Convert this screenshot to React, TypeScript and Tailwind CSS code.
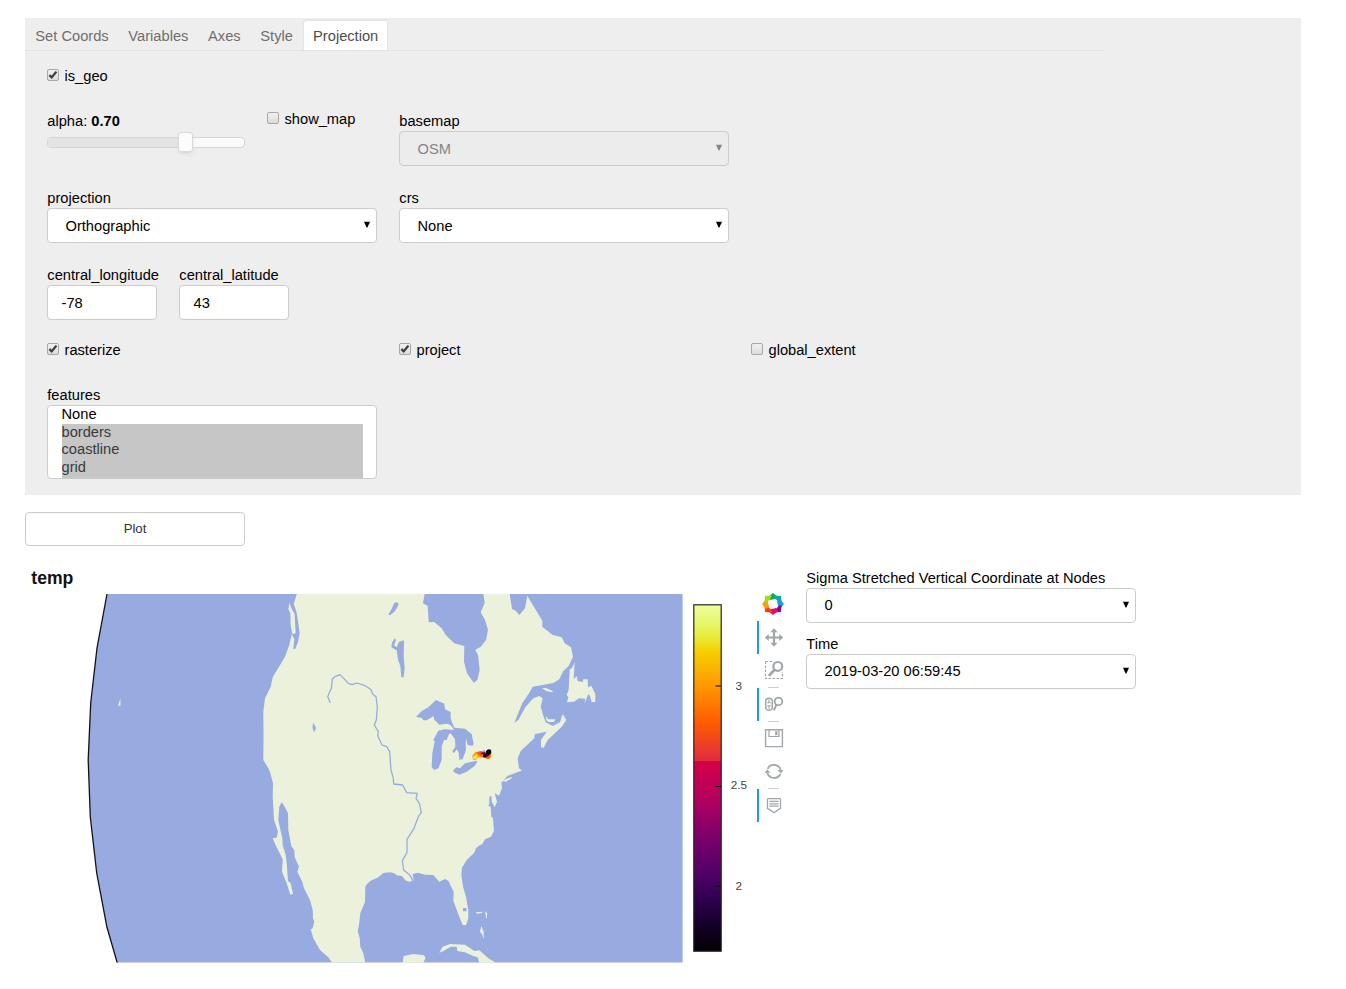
import React from "react";

const TABS = ["Set Coords", "Variables", "Axes", "Style", "Projection"];

function Check({ label, checked = false }: { label: string; checked?: boolean }) {
  return (
    <label className="flex h-5 items-center">
      <span className="mb-[2px] flex h-3 w-3 shrink-0 items-center justify-center rounded-[2px] border border-[#a8a8a8] bg-gradient-to-b from-[#f0f0f0] to-[#dcdcdc]">
        {checked && (
          <svg width="10" height="10" viewBox="0 0 10 10" fill="none">
            <path d="M1.4 5.2 3.7 7.4 8.4 1.6" stroke="#3c3c3c" strokeWidth="2.3" />
          </svg>
        )}
      </span>
      <span className="ml-[5.5px]">{label}</span>
    </label>
  );
}

function Select({
  label,
  value,
  disabled = false,
  raised = false,
}: {
  label: string;
  value: string;
  disabled?: boolean;
  raised?: boolean;
}) {
  return (
    <div className="w-[330px]">
      <div className="h-5 pl-[0.3px]">{label}</div>
      <div
        className={
          disabled
            ? "flex h-[35px] items-center justify-between rounded-[4px] border border-[#cccccc] bg-[#ececec] pr-[6px] pl-[17.5px] text-[#858585]"
            : "flex h-[35px] items-center justify-between rounded-[4px] border border-[#cccccc] bg-white pr-[6px] pl-[17.5px]"
        }
      >
        <span className={raised ? "pb-[2px]" : ""}>{value}</span>
        <svg className="mb-[2px]" width="6" height="7" viewBox="0 0 6 7" fill="currentColor">
          <path d="M0 .8H6L3.4 6.4H2.6Z" />
        </svg>
      </div>
    </div>
  );
}

function NumberBox({ label, value }: { label: string; value: string }) {
  return (
    <div className="w-[110px]">
      <div className="h-5 pl-[0.3px] whitespace-nowrap">{label}</div>
      <div className="flex h-[35px] items-center rounded-[4px] border border-[#cccccc] bg-white pl-[13.5px]">{value}</div>
    </div>
  );
}

const MAINLAND =
  "M297 593.5 293.7 604 296.7 612.7 299.7 633.3 298 641.7 295.3 649 293.3 649 294.3 639.3 291.7 634.3 289.3 645 285 656.7 272.7 677.3 270.7 686.7 265 698.3 263.3 711.7 263.5 737 263.3 760 268.3 768.3 270 772 273 783.3 272.7 796.7 274 820 278 831.7 276.7 837.7 272.7 838.3 276 846 282.7 859.3 282 871.7 286.7 883.3 290.3 894.7 293 893.7 290.7 883.3 288 881 286.7 863.3 285.7 855 282.7 845 282.3 838.3 278.3 820 279.3 806.7 281.7 802.3 284.3 806 288 813.3 288.3 830 291.3 846 294.3 850 294.7 857.3 299 866.7 297.3 871.7 302.3 881.7 304 888.3 310 900 312.7 910 313 918.3 314.3 921.7 312.7 928.3 310.7 929.3 313.3 938.3 320 950 328.3 957.3 332 962.6 365.3 962.6 363.3 953.3 360.3 946.7 359.7 938.3 357.7 931 359 925 360.3 913.3 365 901.7 365.3 886.7 367 884 370.7 880.7 378.3 877.3 383.3 873 390 872.3 394.3 873.3 396.7 875.3 401.7 876 406 880.7 410 881.7 412.3 880.5 413.7 881.5 412.7 874 418.3 872.7 425 874.7 433.3 875 439.3 881.7 445 879 448.3 880.7 453.7 891.7 453.3 900.7 459.3 916.7 462.7 925 466 925.3 468.3 918.3 468.3 910 466 896.7 463 886.7 461.3 875 462 867.7 466.7 860 474.3 852.7 476 848.3 478.7 846 482.3 844 485 839.3 491 836.7 494 830.7 493 818.3 491.3 816.7 490.7 806.7 487.5 805.2 489.3 804.8 489.3 796.7 491.5 796 491.7 801.7 494.7 807.3 497 801.7 494.7 793.3 499 795.7 502 788.3 501.3 782.7 507.3 776 522 770.5 519 768.3 517.7 758.3 520.7 751 534.3 738.3 535 734 546.7 731.7 541 740 541 747.3 543.7 747.7 547.7 740 561.7 726.7 566.3 720 562.7 714 560 722.3 552.7 726 545.7 722.3 542.7 714 540.7 706.7 542.7 698.3 539.3 696 533.3 698.3 525.3 707.3 518.3 720 514.3 722.7 522.3 703.3 529 693.3 532.7 686.7 553.3 683 559.3 679.3 563.3 671 568.7 666 573 656.7 571 647.3 564.7 643.3 561.7 637.3 552.7 635 542.3 626.7 542.3 620.7 527.3 595.7 525 608.3 519.3 615 515.7 610.7 512 609 509.7 593.5 483.3 593.5 484.7 602.7 480.7 612.3 485 620 488 630 486 640 481 646.5 475.3 650 478 655 479.7 670 477.3 680 473.7 682.7 467 673.3 464 661.7 464.3 646 454.3 643.3 445.7 635 441.7 628.3 434.3 622 428.7 622.3 427.7 606 423 603.3 424.7 593.5Z";

const LIMB = "M107 594 97 648 90.7 703 88.2 760 90.3 817 96.7 873 106.9 927 117.2 962.6";

function Plot() {
  return (
    <svg width="732" height="380" viewBox="25 590 732 380">
      <defs>
        <linearGradient id="fire" x1="0" y1="0" x2="0" y2="1">
          <stop offset="0" stopColor="#efff9c" />
          <stop offset="0.05" stopColor="#e6f86e" />
          <stop offset="0.095" stopColor="#e8ea38" />
          <stop offset="0.135" stopColor="#f6cf00" />
          <stop offset="0.24" stopColor="#ff9400" />
          <stop offset="0.34" stopColor="#ff5c00" />
          <stop offset="0.4" stopColor="#f04024" />
          <stop offset="0.45" stopColor="#de2c40" />
          <stop offset="0.451" stopColor="#d60048" />
          <stop offset="0.56" stopColor="#b40060" />
          <stop offset="0.67" stopColor="#7c006c" />
          <stop offset="0.78" stopColor="#500068" />
          <stop offset="0.86" stopColor="#2c004c" />
          <stop offset="0.94" stopColor="#100020" />
          <stop offset="1" stopColor="#020004" />
        </linearGradient>
      </defs>
      <path fill="#97abe1" d={LIMB + "H682.6V594Z"} />
      <path fill="#ebf1da" d={MAINLAND} />
      <path d="M100 593.5H682" stroke="#fff" strokeOpacity="0.5" />
      <path d={LIMB} fill="none" stroke="#111" strokeWidth="1.3" />
      <path fill="#ebf1da" d="M120.4 698.5 118 705.7H120.5Z" />
      <g transform="translate(250 590) scale(.33333)">
        <path fill="#ebf1da" d="M118 40 127 60 134 72 137 130 127 133 122 105 121 70 115 58Z" />
        <g fill="#97abe1">
          <path d="M462 151 447 155 440 172 432 165 438 150 434 145 426 158 424 172 440 181 444 210 451 228 454 262 461 262 464 235 461 200Z" />
          <path d="M443 37 433 38 426 55 415 74 420 76 435 63 446 44Z" />
          <path d="M190 400 188 412 192 426 198 414Z" stroke="#97abe1" />
        </g>
        <path
          fill="none"
          stroke="#97abe1"
          strokeWidth="3.8"
          strokeLinejoin="round"
          d="M241 338 233 320 244 295 247 267 255 260 270 254 282 266 295 280 306 284 320 279 345 287 362 298 368 312 378 320 382 350 379 390 373 405 385 425 383 437 396 465 410 470 419 485 423 540 430 565 431 582 458 585 470 608 502 610 498 625 508 640 514 667 505 680 492 715 471 748 471 788 457 812 461 840 480 856 490 874"
        />
      </g>
      <g transform="translate(430 590) scale(.33333)">
        <g fill="#ebf1da">
          <path d="M434 217 427 232 419 240 416 300 410 315 415 322 411 337 432 335 447 325 466 326 463 342 475 312 480 318 485 336 496 336 496 312 484 287 474 292 473 268 460 268 458 276 443 273 440 258 431 268Z" />
          <path d="M336 295 348 294 368 303 368 307 350 304ZM348 378 355 388 376 388 372 396 355 396 349 390Z" />
          <path d="M216 573 228 567 245 561 245 565 228 575ZM138 967 158 965 156 969 140 971ZM166 964 172 970 170 985 168 985ZM154 1007 150 1025 157 1035 161 1047 161 1025Z" />
          <path d="M28 1088 38 1070 60 1062 105 1064 133 1083 148 1081 175 1105 198 1118 148 1118 143 1102 128 1097 105 1087 82 1083 80 1070 62 1070 40 1083Z" />
          <path d="M-82 1118-79 1098-50 1092-17 1096-14 1105-20 1118Z" />
        </g>
        <g fill="#97abe1">
          <path d="M-42 381-25 363-5 352 18 330 43 341 45 358 62 366 62 385 67 400 74 414 60 404 50 401 28 404 12 388 11 378-10 391-20 391-24 384Z" />
          <path d="M60 402 72 413 105 416 125 432 131 462 128 467 113 465 108 445 107 465 108 480 98 508 88 509 86 488 80 478 71 490 67 484 76 470 75 448 62 430 57 432 50 450 42 450 35 470 35 510 25 535 12 540 5 530 7 490 14 455 10 450 25 422 45 418 72 420Z" />
          <path d="M143 512 135 527 110 545 88 554 72 547 70 540 80 532 90 535 105 520 125 515ZM99 954H109V964H99ZM145 486 165 480 165 486Z" />
        </g>
        <path fill="#ffa000" d="M127 497 136 486 155 483 176 486 184 492 182 503 174 508 160 503 144 502 137 510 129 509Z" />
        <path fill="#ffe34a" d="M129 500 139 493 143 501 137 508 130 507Z" />
        <path fill="#ff5a00" d="M140 487 154 484 160 489 155 500 145 494ZM166 499 182 495 178 506 168 505Z" />
        <path fill="#63006a" d="M150 489 164 486 170 492 177 497 166 503 157 500 160 494Z" />
        <path fill="#0b0012" d="M168 484 174 478 183 479 184 490 176 497 168 492ZM160 493 170 493 168 500 163 502Z" />
      </g>
      <rect x="693.8" y="604.8" width="27.4" height="346.4" fill="url(#fire)" stroke="#252525" strokeWidth="1.2" />
      <path d="M715.5 686H721M715.5 786.5H721M715.5 886.5H721" stroke="#111" strokeWidth="1.2" />
      <g fontFamily="Liberation Sans, sans-serif" fontSize="11.7" fill="#444" textAnchor="middle">
        <text x="738.8" y="689.7">3</text>
        <text x="738.8" y="789.3">2.5</text>
        <text x="738.8" y="889.8">2</text>
      </g>
    </svg>
  );
}

function Tool({ active = false, children }: { active?: boolean; children: React.ReactNode }) {
  return (
    <div
      className={
        active
          ? "flex h-[33px] w-[31px] items-start border-l-2 border-[#14a0da] pt-[6px] pl-[5px]"
          : "flex h-[33px] w-[31px] items-start border-l-2 border-transparent pt-[6px] pl-[5px]"
      }
    >
      <svg width="20" height="20" viewBox="0 0 20 20" fill="none" stroke="#a1a6a9">
        {children}
      </svg>
    </div>
  );
}

function Divider() {
  return <div className="ml-[11px] h-px w-[11px] bg-[#cfcfcf]" />;
}

function Toolbar() {
  return (
    <div className="flex w-[49px] flex-col pt-[24px]">
      <svg className="mb-[5px] ml-[4px]" width="24" height="24" viewBox="-12 -12 24 24">
        <path fill="#02b055" d="M-5-7 0-11 5-7 1.5-5-3-4Z" />
        <path fill="#0faaa0" d="M1-8.5 8-8 8.5-1 5-3 2-5.5Z" />
        <path fill="#149fdf" d="M7-5 11 0 7 5 5 2 4-3Z" />
        <path fill="#8f0a8a" d="M8.5 1 8 8 1 8.5 3 5 5.5 2Z" />
        <path fill="#ee0b62" d="M5 7 0 11-5 7-1.5 5 3 4Z" />
        <path fill="#ff3b18" d="M-1 8.5-8 8-8.5 1-5 3-2 5.5Z" />
        <path fill="#ff9b14" d="M-7 5-11 0-7-5-5-2-4 3Z" />
        <path fill="#a4dd16" d="M-8.5-1-8-8-1-8.5-3-5-5.5-2Z" />
      </svg>
      <Tool active>
        <path d="M10 3V18M3 10.5H17" strokeWidth="2.2" />
        <path d="M10 1.2 13.6 5.2H6.4ZM10 19.8 6.4 15.8H13.6ZM.8 10.5 4.8 6.9V14.1ZM19.2 10.5 15.2 14.1V6.9Z" fill="#a1a6a9" stroke="none" />
      </Tool>
      <Tool>
        <path d="M1.5 1.5H8M1.5 1.5V18.5H18.5V12" strokeDasharray="2.6 1.4" strokeWidth="1.2" />
        <circle cx="13.8" cy="6.4" r="4.4" strokeWidth="2.2" />
        <path d="M10.8 9.5 4.8 15.8" strokeWidth="2.6" />
      </Tool>
      <Divider />
      <Tool active>
        <rect x="1.7" y="4.2" width="6.6" height="12" rx="3.3" strokeWidth="1.5" />
        <path d="M5 5.5V8.5M5 12V15M3.2 8.7H6.8M3.2 11.7H6.8" strokeWidth="1.1" />
        <circle cx="14.5" cy="7.4" r="3.8" strokeWidth="1.8" />
        <path d="M12.5 10.5 9.8 16.4" strokeWidth="2" />
      </Tool>
      <Divider />
      <Tool>
        <path d="M1.6 1.8H18.4V18.6H1.6Z" strokeWidth="1.4" />
        <path d="M5 2V8.5H15V2" strokeWidth="1.2" />
        <path d="M12.3 3.2V7.2" strokeWidth="2.4" />
      </Tool>
      <Tool>
        <path d="M3.6 7.8A7 7 0 0 1 16.6 8.8M16.4 13A7 7 0 0 1 3.4 12" strokeWidth="1.8" />
        <path d="M13.4 9.2 19.4 8.7 17 12.4ZM6.6 11.6 .6 12.1 3 8.4Z" fill="#a1a6a9" stroke="none" />
      </Tool>
      <Divider />
      <Tool active>
        <path d="M4.2 3.6H15.8L16.5 4.3V13.6L14.6 14.4 10 17.8 5.4 14.4 3.5 13.6V4.3Z" strokeWidth="1.3" />
        <path d="M5.4 6.4H14.6M5.4 8.8H14.6M5.4 11.2H14.6" strokeWidth="1.3" />
      </Tool>
    </div>
  );
}

export default function App() {
  return (
    <main className="h-[989px] w-[1346px] overflow-hidden bg-white pt-[18px] pl-[25px] font-['Liberation_Sans',Arial,sans-serif] text-[14.67px] leading-5 text-black">
      <section className="h-[477px] w-[1276px] bg-[#eeeeee]">
        <nav className="flex h-[33px] w-[1079px] items-end border-b border-[#e2e2e2] pl-[0.5px]">
          {TABS.map((t) =>
            t === "Projection" ? (
              <div key={t} className="ml-[0.3px] flex h-[31px] items-start rounded-t-[4px] border border-t-2 border-b-0 border-[#e4e4e4] bg-white px-[9px] pt-[5px] text-[#4d4d4d]">
                {t}
              </div>
            ) : (
              <div key={t} className="flex h-[32px] items-start px-[9.85px] pt-[8px] text-[#6e6e6e]">
                {t}
              </div>
            ),
          )}
        </nav>
        <div className="pt-[15px] pl-[22px]">
          <Check label="is_geo" checked />
          <div className="mt-[25px] flex h-[55px]">
            <div className="w-[220px]">
              <div className="pl-[0.3px]">
                alpha: <b>0.70</b>
              </div>
              <div className="mt-[6px] flex h-[11px] w-[198px] items-center rounded-[4px] border border-[#d5d5d5] bg-[#fafafa]">
                <div className="h-[9px] w-[130px] shrink-0 rounded-l-[3px] bg-[#e4e4e4]" />
                <div className="mb-px h-[20px] w-[15px] shrink-0 rounded-[3px] border border-[#d9d9d9] bg-[#fcfcfc] shadow-[0_2px_4px_-2px_#bbb]" />
              </div>
            </div>
            <div className="-mt-[2px] w-[132px]">
              <Check label="show_map" />
            </div>
            <Select label="basemap" value="OSM" disabled />
          </div>
          <div className="mt-[22px] flex gap-[22px]">
            <Select label="projection" value="Orthographic" />
            <Select label="crs" value="None" />
          </div>
          <div className="mt-[22px] flex gap-[22px]">
            <NumberBox label="central_longitude" value="-78" />
            <NumberBox label="central_latitude" value="43" />
          </div>
          <div className="mt-5 grid grid-cols-[352px_352px_352px]">
            <Check label="rasterize" checked />
            <Check label="project" checked />
            <Check label="global_extent" />
          </div>
          <div className="mt-[25px] pl-[0.3px]">features</div>
          <div className="flex h-[74px] w-[330px] flex-col overflow-hidden rounded-[4px] border border-[#cccccc] bg-white px-[13.5px] leading-[16px]">
            <div className="h-[18px]">None</div>
            <div className="flex-1 bg-[#c6c6c6] text-[#3a3a3a]">
              <div className="h-[17px]">borders</div>
              <div className="h-[18px]">coastline</div>
              <div>grid</div>
            </div>
          </div>
        </div>
      </section>
      <button className="mt-[17px] flex h-[34px] w-[220px] items-center justify-center rounded-[4px] border border-[#cccccc] bg-white text-[13.2px] text-[#333]">
        Plot
      </button>
      <section className="mt-[22px] flex">
        <div className="w-[732px]">
          <h1 className="h-[22px] pl-[6.3px] text-[17.6px] leading-5 font-bold text-[#111]">temp</h1>
          <Plot />
        </div>
        <Toolbar />
        <div className="flex flex-col gap-[11px]">
          <Select label="Sigma Stretched Vertical Coordinate at Nodes" value="0" raised />
          <Select label="Time" value="2019-03-20 06:59:45" raised />
        </div>
      </section>
    </main>
  );
}
